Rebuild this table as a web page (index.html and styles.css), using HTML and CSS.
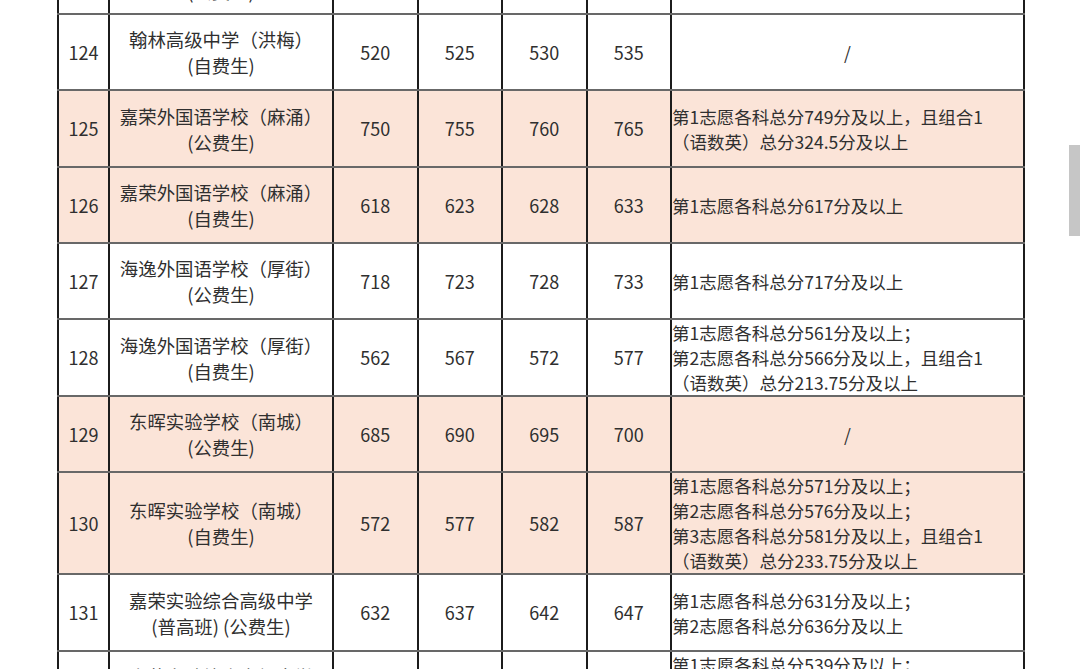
FILE: index.html
```html
<!DOCTYPE html>
<html lang="zh-CN">
<head>
<meta charset="utf-8">
<title>分数线</title>
<link rel="stylesheet" href="styles.css">
</head>
<body>
<div class="page">
  <table class="scores">
    <colgroup>
      <col class="c-no"><col class="c-name"><col class="c-num"><col class="c-num"><col class="c-num"><col class="c-num"><col class="c-cond">
    </colgroup>
    <tbody>
      <tr class="h76 first">
        <td class="no">123</td>
        <td class="name">翰林高级中学（洪梅）<br>(公费生)</td>
        <td class="num">545</td><td class="num">550</td><td class="num">555</td><td class="num">560</td>
        <td class="cond center">/</td>
      </tr>
      <tr class="h76">
        <td class="no">124</td>
        <td class="name">翰林高级中学（洪梅）<br>(自费生)</td>
        <td class="num">520</td><td class="num">525</td><td class="num">530</td><td class="num">535</td>
        <td class="cond center">/</td>
      </tr>
      <tr class="h77 peach">
        <td class="no">125</td>
        <td class="name">嘉荣外国语学校（麻涌）<br>(公费生)</td>
        <td class="num">750</td><td class="num">755</td><td class="num">760</td><td class="num">765</td>
        <td class="cond">第1志愿各科总分749分及以上，且组合1<br>（语数英）总分324.5分及以上</td>
      </tr>
      <tr class="h76 peach">
        <td class="no">126</td>
        <td class="name">嘉荣外国语学校（麻涌）<br>(自费生)</td>
        <td class="num">618</td><td class="num">623</td><td class="num">628</td><td class="num">633</td>
        <td class="cond">第1志愿各科总分617分及以上</td>
      </tr>
      <tr class="h76">
        <td class="no">127</td>
        <td class="name">海逸外国语学校（厚街）<br>(公费生)</td>
        <td class="num">718</td><td class="num">723</td><td class="num">728</td><td class="num">733</td>
        <td class="cond">第1志愿各科总分717分及以上</td>
      </tr>
      <tr class="h77">
        <td class="no">128</td>
        <td class="name">海逸外国语学校（厚街）<br>(自费生)</td>
        <td class="num">562</td><td class="num">567</td><td class="num">572</td><td class="num">577</td>
        <td class="cond">第1志愿各科总分561分及以上；<br>第2志愿各科总分566分及以上，且组合1<br>（语数英）总分213.75分及以上</td>
      </tr>
      <tr class="h76 peach">
        <td class="no">129</td>
        <td class="name">东晖实验学校（南城）<br>(公费生)</td>
        <td class="num">685</td><td class="num">690</td><td class="num">695</td><td class="num">700</td>
        <td class="cond center">/</td>
      </tr>
      <tr class="h101 peach">
        <td class="no">130</td>
        <td class="name">东晖实验学校（南城）<br>(自费生)</td>
        <td class="num">572</td><td class="num">577</td><td class="num">582</td><td class="num">587</td>
        <td class="cond">第1志愿各科总分571分及以上；<br>第2志愿各科总分576分及以上；<br>第3志愿各科总分581分及以上，且组合1<br>（语数英）总分233.75分及以上</td>
      </tr>
      <tr class="h77">
        <td class="no">131</td>
        <td class="name">嘉荣实验综合高级中学<br>(普高班) (公费生)</td>
        <td class="num">632</td><td class="num">637</td><td class="num">642</td><td class="num">647</td>
        <td class="cond">第1志愿各科总分631分及以上；<br>第2志愿各科总分636分及以上</td>
      </tr>
      <tr class="h101">
        <td class="no">132</td>
        <td class="name">嘉荣实验综合高级中学<br>(普高班)<br>(自费生)</td>
        <td class="num">539</td><td class="num">544</td><td class="num">549</td><td class="num">554</td>
        <td class="cond">第1志愿各科总分539分及以上；<br>第2志愿各科总分544分及以上；<br>第3志愿各科总分549分及以上，且组合1<br>（语数英）总分213.75分及以上</td>
      </tr>
    </tbody>
  </table>
  <div class="scroll-thumb"></div>
</div>
</body>
</html>
```

FILE: styles.css
```css
html, body {
  margin: 0;
  padding: 0;
  background: #ffffff;
}

body {
  width: 1080px;
  height: 669px;
  overflow: hidden;
  font-family: "Noto Sans CJK SC", "Noto Sans", sans-serif;
  color: #2f2f2f;
}

.page {
  position: relative;
  width: 1080px;
  height: 669px;
  overflow: hidden;
}

.scores {
  border-collapse: collapse;
  table-layout: fixed;
  margin-left: 57px;
  margin-top: -63px;
  width: 966px;
  font-size: 17.5px;
  line-height: 25px;
}

.c-no { width: 51px; }
.c-name { width: 224px; }
.c-num { width: 84.5px; }
.c-cond { width: 353px; }

.scores td {
  border-left: 2px solid #1c1c1c;
  border-right: 2px solid #1c1c1c;
  border-top: 2px solid #686868;
  border-bottom: 2px solid #686868;
  padding: 0;
  vertical-align: middle;
  text-align: center;
  white-space: nowrap;
}

.scores td.no,
.scores td.num {
  font-size: 18px;
}

.scores td.name {
  font-size: 18.4px;
  line-height: 26px;
}

.scores td.cond {
  text-align: left;
  padding-left: 0;
}

.scores td.cond.center {
  text-align: center;
}

.first td {
  padding-top: 3px;
}

.h76 { height: 76px; }
.h77 { height: 77px; }
.h101 { height: 101px; }

.peach td {
  background: #fbe4d8;
}

.scroll-thumb {
  position: absolute;
  left: 1069px;
  top: 145px;
  width: 11px;
  height: 91px;
  background: #c6c6c6;
}
```
